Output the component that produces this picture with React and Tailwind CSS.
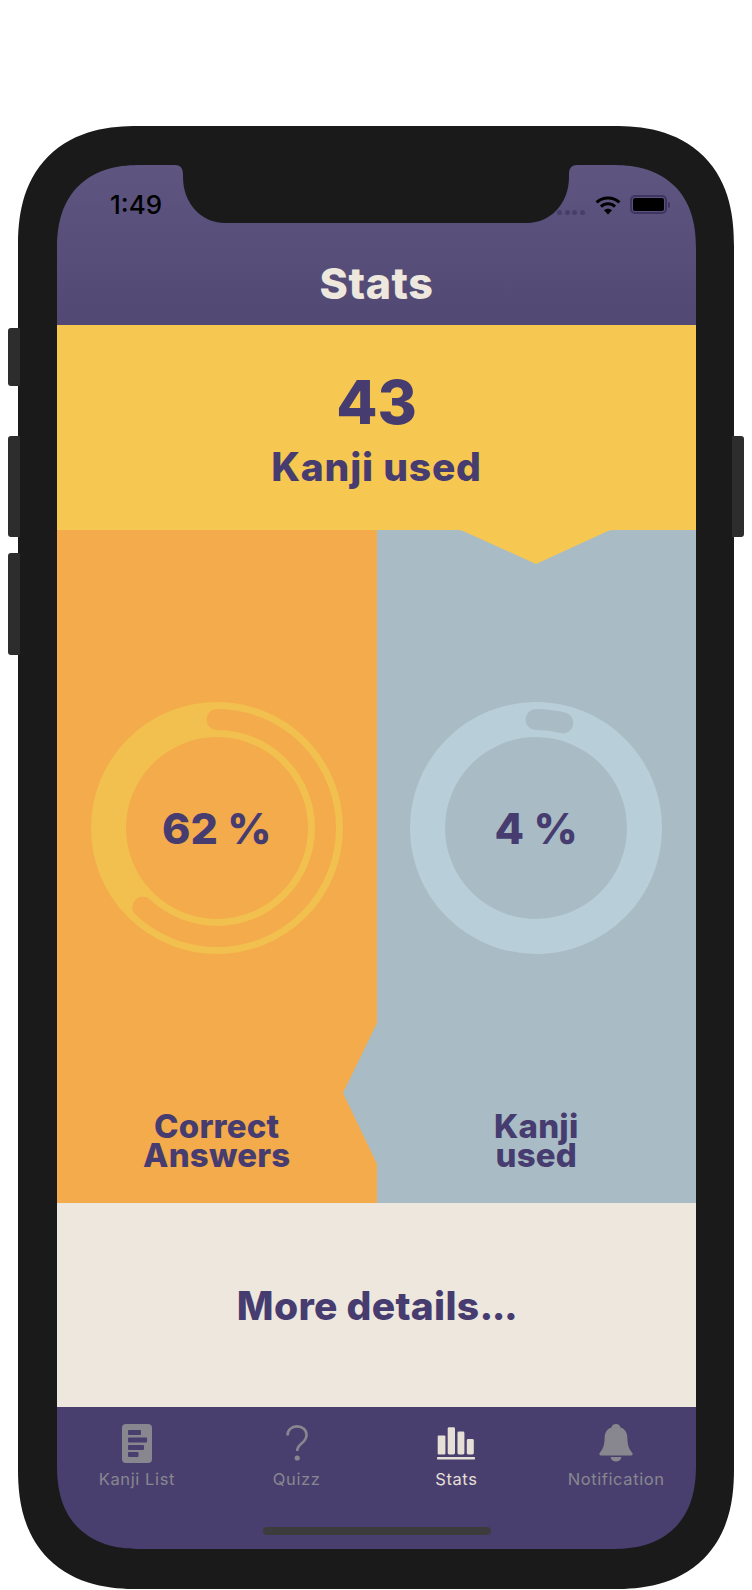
function Ring({ pct, base, groove, label }) {
  return (
    <div className="relative h-[252px] w-[252px]">
      <svg width="252" height="252" viewBox="0 0 252 252" className="block">
        <circle cx="126" cy="126" r="108.5" fill="none" stroke={base} strokeWidth="35" />
        <circle
          cx="126"
          cy="126"
          r="108.5"
          fill="none"
          stroke={groove}
          strokeWidth="21"
          strokeLinecap="round"
          pathLength="100"
          strokeDasharray={`${pct} 100`}
          transform="rotate(-90 126 126)"
        />
      </svg>
      <div className="absolute inset-0 flex items-center justify-center text-[43px] font-extrabold text-[#463c70]">
        {label}
      </div>
    </div>
  );
}

function ListIcon() {
  return (
    <svg width="30" height="39" viewBox="0 0 30 39">
      <rect width="30" height="39" rx="4" fill="#88878f" />
      <g fill="#483f6f">
        <rect x="6" y="6" width="13" height="5" rx="1" />
        <rect x="6" y="13.5" width="19" height="5" rx="1" />
        <rect x="6" y="21" width="16" height="5" rx="1" />
        <rect x="6" y="28" width="10.5" height="5" rx="1" />
      </g>
    </svg>
  );
}

function QuestionIcon() {
  return (
    <svg width="22" height="36" viewBox="0 0 22 36">
      <path
        d="M1.5 10.5C1.5 5 5.5 1.4 11 1.4s9.5 3.6 9.5 8.6c0 4-2.2 6.2-5 8.5-2.6 2.2-4.3 3.8-4.3 7.5"
        fill="none"
        stroke="#88878f"
        strokeWidth="2.6"
      />
      <circle cx="11.2" cy="33" r="2.6" fill="#88878f" />
    </svg>
  );
}

function StatsIcon() {
  return (
    <svg width="38" height="33" viewBox="0 0 38 33" fill="#e6dfd6">
      <rect x="0.7" y="8.5" width="7.7" height="19" rx="1" />
      <rect x="10.7" y="0.2" width="7.3" height="27.3" rx="1.4" />
      <rect x="20.5" y="4.5" width="6.9" height="23" rx="1.4" />
      <rect x="29.8" y="12" width="7" height="15.5" rx="1.4" />
      <rect x="0" y="30" width="38" height="2.4" rx="0.6" />
    </svg>
  );
}

function BellIcon() {
  return (
    <svg width="34" height="38" viewBox="0 0 34 38" fill="#88878f">
      <path d="M17 0c2.6 0 4.2 1.6 4.6 3.6 4.8 1.6 6.6 5.4 6.8 10.4.2 5.4.6 10 4.6 14.4 1.2 1.3.8 3.1-1 3.1H2c-1.8 0-2.2-1.8-1-3.1 4-4.4 4.4-9 4.6-14.4.2-5 2-8.8 6.8-10.4C12.8 1.6 14.4 0 17 0z" />
      <path d="M11.5 33h11c-.6 2.9-2.8 4.6-5.5 4.6s-4.9-1.7-5.5-4.6z" />
    </svg>
  );
}

function Tab({ icon, label, active }) {
  return (
    <div className="flex flex-col items-center">
      <div className="flex h-[40px] items-center justify-center">{icon}</div>
      <div
        className={`mt-[4px] text-[16.5px] leading-[24px] tracking-[0.6px] ${active ? "text-[#e6dfd6]" : "text-[#88878f]"}`}
      >
        {label}
      </div>
    </div>
  );
}

function SideButton({ className }) {
  return <div className={`absolute w-[12px] bg-[#2d2d2d] ${className}`} />;
}

function Wifi() {
  return (
    <svg width="26" height="20" viewBox="0 0 26 20" fill="none" stroke="#000">
      <path d="M1.6 7.4C7.8 1.4 18.2 1.4 24.4 7.4" strokeWidth="3" />
      <path d="M6 11.6c4-3.8 10-3.8 14 0" strokeWidth="3" />
      <path d="M13 19.6l-4-4.4c2.2-2 5.8-2 8 0z" fill="#000" stroke="none" />
    </svg>
  );
}

function Battery() {
  return (
    <div className="flex items-center">
      <div className="h-[19px] w-[37px] rounded-[5px] border-2 border-[#3e3560] p-[1px]">
        <div className="h-full w-full rounded-[2px] bg-black" />
      </div>
      <div className="ml-[1px] h-[6px] w-[2px] rounded-r-[2px] bg-[#3e3560]" />
    </div>
  );
}

export default function App() {
  return (
    <div
      className="h-[1590px] w-[752px] overflow-hidden bg-white pl-[18px] pt-[126px]"
      style={{ fontFamily: "Inter, 'Liberation Sans', sans-serif" }}
    >
      <div className="relative h-[1463px] w-[716px] rounded-[120px] bg-[#1a1a1a] px-[39px] pt-[39px] [corner-shape:superellipse(1.25)]">
        <SideButton className="left-[-10px] top-[202px] h-[58px] rounded-l-[3px]" />
        <SideButton className="left-[-10px] top-[310px] h-[101px] rounded-l-[3px]" />
        <SideButton className="left-[-10px] top-[427px] h-[102px] rounded-l-[3px]" />
        <SideButton className="right-[-10px] top-[310px] h-[101px] rounded-r-[3px]" />

        <div className="relative flex h-[1384px] w-[639px] flex-col overflow-hidden rounded-[84px] [corner-shape:superellipse(1.25)]">
          <header className="h-[160px] shrink-0 bg-gradient-to-b from-[#5e5581] to-[#514973]">
            <div className="flex h-[64px] items-start justify-between pl-[53px] pr-[26px] pt-[24px]">
              <span className="text-[26px] font-medium leading-[32px] text-black">1:49</span>
              <div className="flex items-center pt-[5px]">
                <div className="mr-[10px] mt-[16px] flex gap-[2.7px]">
                  <span className="h-[5px] w-[5px] rounded-full bg-[#473e6b]" />
                  <span className="h-[5px] w-[5px] rounded-full bg-[#473e6b]" />
                  <span className="h-[5px] w-[5px] rounded-full bg-[#473e6b]" />
                  <span className="h-[5px] w-[5px] rounded-full bg-[#473e6b]" />
                </div>
                <Wifi />
                <div className="ml-[9px]">
                  <Battery />
                </div>
              </div>
            </div>
            <h1 className="mt-[30px] text-center text-[43px] font-extrabold leading-[48px] tracking-[0.6px] text-[#ede7dd]">
              Stats
            </h1>
          </header>

          <section className="flex h-[205px] shrink-0 flex-col items-center bg-[#f6c751] pt-[44px] text-[#463c70]">
            <div className="text-[60px] font-extrabold leading-[66px]">43</div>
            <div className="mt-[9px] text-[39px] font-extrabold leading-[46px] tracking-[0.8px]">Kanji used</div>
          </section>

          <section className="relative grid h-[673px] shrink-0 grid-cols-2">
            <div className="flex flex-col items-center bg-[#f4ab4b] pt-[172px]">
              <Ring pct={62} base="#f1c04e" groove="#f4ab4b" label="62 %" />
              <div className="mt-[158px] text-center text-[33px] font-extrabold leading-[29px] tracking-[0.2px] text-[#463c70]">
                Correct
                <br />
                Answers
              </div>
            </div>
            <div className="flex flex-col items-center bg-[#a9bcc5] pt-[172px]">
              <Ring pct={4} base="#b8cfd9" groove="#a9bcc5" label="4 %" />
              <div className="mt-[158px] text-center text-[33px] font-extrabold leading-[29px] tracking-[0.2px] text-[#463c70]">
                Kanji
                <br />
                used
              </div>
            </div>
            <svg className="absolute left-[399px] top-[-1px]" width="159" height="36" viewBox="0 0 159 36">
              <path d="M0 0H159L152 2 80 35 7 2z" fill="#f6c751" />
            </svg>
            <svg className="absolute left-[286px] top-[491px]" width="35" height="145" viewBox="0 0 35 145">
              <path d="M35 0V145L0 72z" fill="#a9bcc5" />
            </svg>
          </section>

          <section className="flex h-[204px] shrink-0 items-center justify-center bg-[#ede7dd] pt-[2px] text-[39px] font-extrabold tracking-[0.3px] text-[#463c70]">
            <span>
              More details<span className="tracking-[-1.5px]">...</span>
            </span>
          </section>

          <nav className="relative flex-1 bg-[#483f6f] pt-[16px]">
            <div className="grid grid-cols-4">
              <Tab icon={<ListIcon />} label="Kanji List" />
              <Tab icon={<QuestionIcon />} label="Quizz" />
              <Tab icon={<StatsIcon />} label="Stats" active />
              <Tab icon={<BellIcon />} label="Notification" />
            </div>
            <div className="absolute bottom-[14px] left-[206px] h-[8px] w-[228px] rounded-full bg-[#3c3c3c]" />
          </nav>

          <svg className="absolute left-[118px] top-0" width="402" height="58" viewBox="0 0 402 58" fill="#1a1a1a">
            <path d="M0 0C5 0 8 3 8 9V12C8 38 26 58 50 58H352C376 58 394 38 394 12V9C394 3 397 0 402 0z" />
          </svg>
        </div>
      </div>
    </div>
  );
}
